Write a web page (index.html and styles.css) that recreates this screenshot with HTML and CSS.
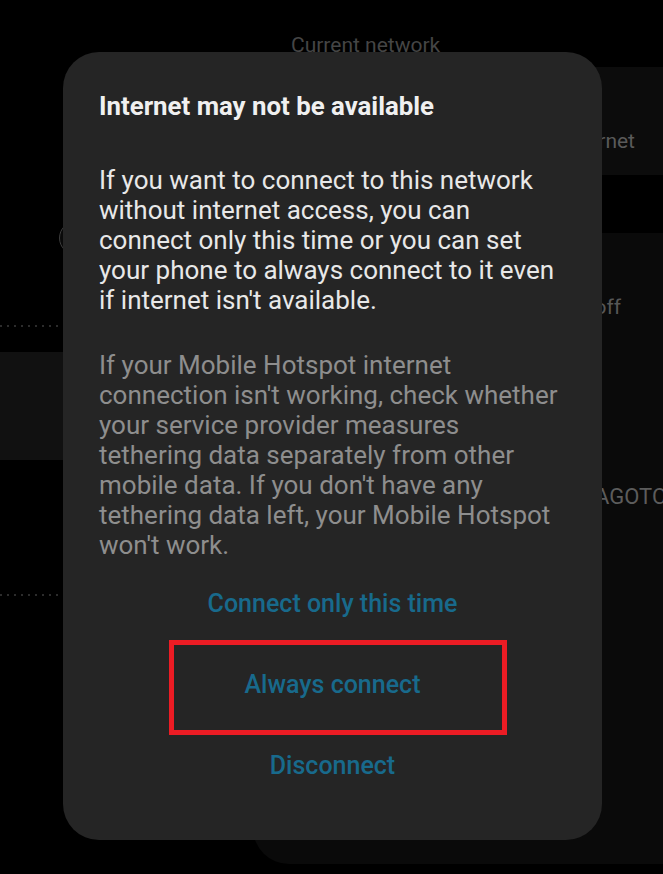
FILE: index.html
```html
<!DOCTYPE html>
<html lang="en">
<head>
<meta charset="utf-8">
<title>Internet may not be available</title>
<link rel="stylesheet" href="styles.css">
</head>
<body>
<div class="screen">
  <div class="left-col">
    <div class="avatar"></div>
    <div class="dots dots-a"></div>
    <div class="left-block"></div>
    <div class="dots dots-b"></div>
  </div>
  <div class="right-col">
    <div class="section-label">Current network</div>
    <div class="card card-current">
      <span class="card-status">No internet</span>
    </div>
    <div class="card card-list">
      <div class="list-row row-off"><span>Turn off</span></div>
      <div class="list-row row-net"><span>TAMAGOTCHI</span></div>
    </div>
  </div>
</div>

<div class="dialog" role="dialog">
  <h1 class="dialog-title">Internet may not be available</h1>
  <p class="dialog-text primary">If you want to connect to this network<br>without internet access, you can<br>connect only this time or you can set<br>your phone to always connect to it even<br>if internet isn't available.</p>
  <p class="dialog-text secondary">If your Mobile Hotspot internet<br>connection isn't working, check whether<br>your service provider measures<br>tethering data separately from other<br>mobile data. If you don't have any<br>tethering data left, your Mobile Hotspot<br>won't work.</p>
  <div class="actions">
    <button class="action">Connect only this time</button>
    <button class="action">Always connect</button>
    <button class="action">Disconnect</button>
  </div>
</div>

<div class="highlight"></div>
</body>
</html>
```

FILE: styles.css
```css
html, body {
  margin: 0;
  padding: 0;
  background: #000;
}
body {
  width: 663px;
  height: 874px;
  overflow: hidden;
  position: relative;
  font-family: Roboto, "Noto Sans", "Liberation Sans", sans-serif;
}

/* dimmed background screen */
.screen {
  display: grid;
  grid-template-columns: 253px 410px;
  width: 663px;
  height: 874px;
}
.left-col {
  display: flex;
  flex-direction: column;
  padding-top: 221px;
}
.avatar {
  width: 34px;
  height: 34px;
  margin-left: 59px;
  border-radius: 50%;
  border: 1px solid #3d3d3d;
  background: #0a0a0a;
  box-sizing: border-box;
}
.dots {
  height: 2px;
  background: repeating-linear-gradient(to right, #2c2c2c 0 2px, transparent 2px 7px);
}
.dots-a { margin-top: 70px; }
.left-block {
  height: 108px;
  margin-top: 25px;
  background: #111;
}
.dots-b { margin-top: 134px; }

.right-col {
  display: flex;
  flex-direction: column;
}
.section-label {
  height: 67px;
  box-sizing: border-box;
  padding: 32px 0 0 38px;
  font-size: 21px;
  line-height: 26px;
  color: #454545;
}
.card {
  background: #0c0c0c;
  border-radius: 28px 0 0 28px;
}
.card-current {
  height: 108px;
  display: flex;
  align-items: flex-end;
  justify-content: flex-end;
  padding: 0 28px 22px 0;
  box-sizing: border-box;
}
.card-status {
  font-size: 21px;
  color: #5a5a5a;
}
.card-list {
  margin-top: 58px;
  height: 631px;
  border-radius: 28px 0 0 36px;
  background: #0a0a0a;
  display: flex;
  flex-direction: column;
}
.list-row {
  display: flex;
  white-space: nowrap;
  color: #565656;
}
.row-off {
  justify-content: flex-end;
  padding: 60px 42px 0 0;
  font-size: 21px;
  line-height: 28px;
}
.row-net {
  padding: 162px 0 0 296px;
  font-size: 22px;
  line-height: 28px;
  color: #5c5c5c;
}

/* dialog overlay */
.dialog {
  position: absolute;
  left: 63px;
  top: 52px;
  width: 539px;
  height: 788px;
  box-sizing: border-box;
  padding: 39px 36px 0 36px;
  background: #252525;
  border-radius: 36px;
  display: flex;
  flex-direction: column;
}
.dialog-title {
  margin: 0;
  font-size: 25.8px;
  line-height: 30px;
  font-weight: 700;
  color: #f0f0f0;
}
.dialog-text {
  margin: 0;
  font-size: 26px;
  line-height: 30px;
  white-space: nowrap;
}
.dialog-text.primary {
  margin-top: 44px;
  color: #e8e8e8;
}
.dialog-text.secondary {
  margin-top: 35px;
  color: #8e8e8e;
}
.actions {
  display: flex;
  flex-direction: column;
  margin-top: 3px;
}
.action {
  height: 81px;
  border: 0;
  background: transparent;
  padding: 0;
  font-family: inherit;
  font-size: 25px;
  font-weight: 500;
  color: #186a8c;
}

/* annotation box */
.highlight {
  position: absolute;
  left: 169px;
  top: 640px;
  width: 338px;
  height: 95px;
  box-sizing: border-box;
  border: 5px solid #ec1c24;
}
```
